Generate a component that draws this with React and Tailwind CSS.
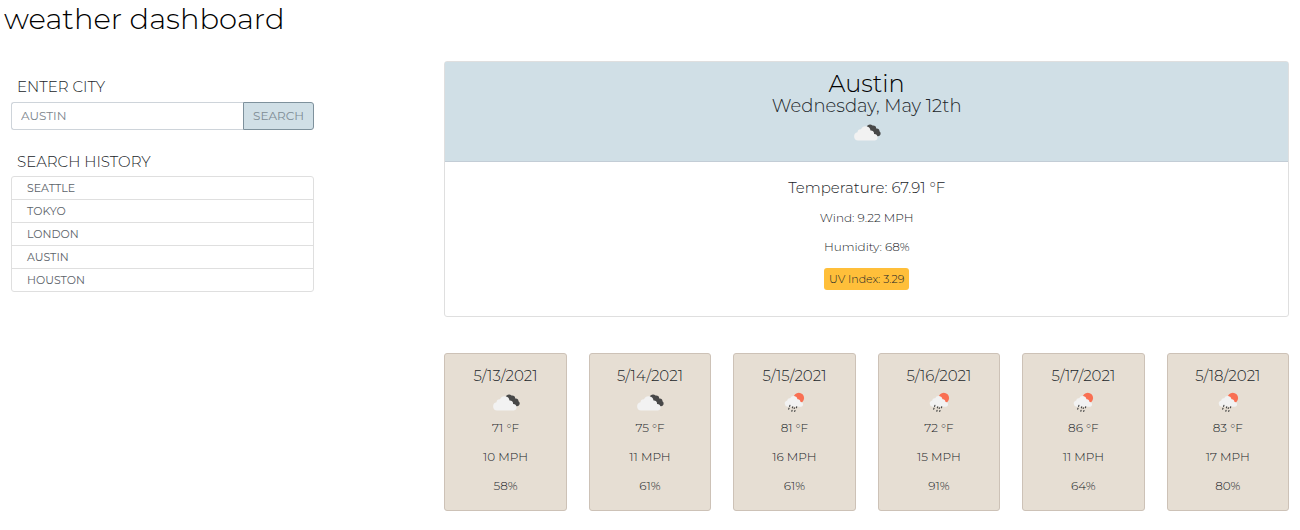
const history = ["SEATTLE", "TOKYO", "LONDON", "AUSTIN", "HOUSTON"];

const forecast = [
  { date: "5/13/2021", icon: "clouds", temp: "71 °F", wind: "10 MPH", humidity: "58%" },
  { date: "5/14/2021", icon: "clouds", temp: "75 °F", wind: "11 MPH", humidity: "61%" },
  { date: "5/15/2021", icon: "rain", temp: "81 °F", wind: "16 MPH", humidity: "61%" },
  { date: "5/16/2021", icon: "rain", temp: "72 °F", wind: "15 MPH", humidity: "91%" },
  { date: "5/17/2021", icon: "rain", temp: "86 °F", wind: "11 MPH", humidity: "64%" },
  { date: "5/18/2021", icon: "rain", temp: "83 °F", wind: "17 MPH", humidity: "80%" },
];

function CloudsIcon() {
  return (
    <svg viewBox="0 1 36 34" className="h-[34px] w-9" role="img" aria-label="Broken clouds">
      <path
        d="M17.500 12.600a3.500 3.500 0 0 1 6-2.100 3 3 0 0 1 3.700 3.100 2.900 2.900 0 0 1 3.300 2.700 2.700 2.700 0 0 1-1.900 4.900c-2.200.4-3.200-.9-4.200-2.200L19 15z"
        fill="#484848"
      />
      <path
        d="M9 25.600a4.200 4.200 0 0 1-.5-8.300 3.300 3.300 0 0 1 3.500-3.100 5 5 0 0 1 9.500 1.300 3.200 3.200 0 0 1 3.600 3.400 3.400 3.400 0 0 1 .9 6.700z"
        fill="#f2f2f2"
      />
    </svg>
  );
}

function RainIcon() {
  return (
    <svg viewBox="0 1 36 34" className="h-[34px] w-9" role="img" aria-label="Rain">
      <circle cx="22.800" cy="13" r="5.300" fill="#f96f52" />
      <path
        d="M11.600 21.800a3.200 3.200 0 0 1-.4-6.300 2.600 2.600 0 0 1 2.900-2.300 4 4 0 0 1 7.500 1.100 2.500 2.500 0 0 1 2.900 2.600 2.500 2.500 0 0 1 .8 4.900z"
        fill="#f2f2f2"
      />
      <path
        d="M13.900 20.400l-.3 1M13 23.200l-.3.9M16.700 21.900l-.3.9M16.100 25.300l-.3.9M20.700 21.800l-.3.900M18.400 22.900l-.2.600M19 25.500l-.3.900"
        stroke="#484848"
        strokeWidth="1.200"
        strokeLinecap="round"
        fill="none"
      />
    </svg>
  );
}

function WeatherIcon({ kind }) {
  return kind === "rain" ? <RainIcon /> : <CloudsIcon />;
}

function SearchPanel() {
  return (
    <aside className="col-span-3 px-[11px] pt-4">
      <form onSubmit={(event) => event.preventDefault()}>
        <label htmlFor="city" className="block px-1.5 text-[15px] leading-5">
          ENTER CITY
        </label>
        <div className="mt-[5px] flex h-7">
          <input
            id="city"
            type="text"
            placeholder="AUSTIN"
            className="min-w-0 flex-1 rounded-l-[3px] border border-r-0 border-[#ced4da] px-[9px] text-xs font-normal placeholder:text-[#7d868e] placeholder:opacity-100"
          />
          <button
            type="submit"
            className="rounded-r-[3px] border border-[#7e919c] bg-[#d0dfe6] px-[9px] text-xs font-normal text-[#7d8b94]"
          >
            SEARCH
          </button>
        </div>
      </form>
      <h2 className="mt-[22px] px-1.5 text-[15px] leading-5">SEARCH HISTORY</h2>
      <ul className="mt-1 divide-y divide-[#dfdfdf] rounded-[3px] border border-[#dfdfdf] text-[11px] font-normal text-[#5c636a]">
        {history.map((city) => (
          <li key={city}>
            <button type="button" className="block w-full px-[15px] py-[3px] text-left leading-4">
              {city}
            </button>
          </li>
        ))}
      </ul>
    </aside>
  );
}

function CurrentWeather() {
  return (
    <section className="rounded-[3px] border border-[#dfdfdf] text-center">
      <header className="flex flex-col items-center border-b border-[#c3cdd6] bg-[#d0dfe6] pt-2.5 pb-[11px]">
        <h2 className="text-2xl leading-6 text-black">Austin</h2>
        <p className="text-lg leading-5">Wednesday, May 12th</p>
        <WeatherIcon kind="clouds" />
      </header>
      <div className="flex flex-col items-center pt-4 pb-[26px] text-xs">
        <p className="text-[15px] leading-5">Temperature: 67.91 °F</p>
        <p className="mt-3 leading-4">Wind: 9.22 MPH</p>
        <p className="mt-[13px] leading-4">Humidity: 68%</p>
        <p className="mt-[13px] rounded-[3px] bg-[#ffbf3a] px-[5px] py-[3px] text-[11px] leading-4">
          UV Index: 3.29
        </p>
      </div>
    </section>
  );
}

function ForecastCard({ day }) {
  return (
    <article className="flex flex-col items-center rounded-[3px] border border-[#cdc2b7] bg-[#e6ded3] pt-3 pb-4 text-xs">
      <h3 className="text-[15px] leading-5">{day.date}</h3>
      <WeatherIcon kind={day.icon} />
      <p className="leading-4">{day.temp}</p>
      <p className="mt-[13px] leading-4">{day.wind}</p>
      <p className="mt-[13px] leading-4">{day.humidity}</p>
    </article>
  );
}

export default function App() {
  return (
    <div className="min-h-screen bg-white font-['Montserrat','Inter',sans-serif] font-light text-[#212529]">
      <h1 className="px-1 text-[29px] leading-[38px] text-black">weather dashboard</h1>
      <main className="mt-[23px] grid grid-cols-12">
        <SearchPanel />
        <div className="col-span-8 col-start-5 px-[11px]">
          <CurrentWeather />
          <div className="mt-9 grid grid-cols-6 gap-[22px]">
            {forecast.map((day) => (
              <ForecastCard key={day.date} day={day} />
            ))}
          </div>
        </div>
      </main>
    </div>
  );
}
